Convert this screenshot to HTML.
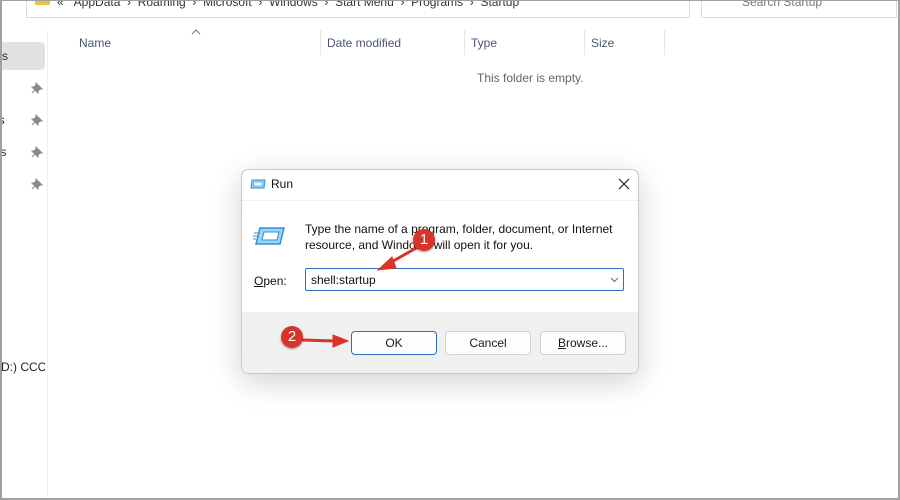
<html><head><style>
body{margin:0;width:900px;height:500px;overflow:hidden;background:#fff;font-family:"Liberation Sans",sans-serif;position:relative}
.a{position:absolute;white-space:nowrap}
.h{font-size:12px;color:#4a5572}
.sep{position:absolute;top:30px;width:1px;height:25px;background:#e5e5e5}
.pin{position:absolute;left:31px}
.btn{position:absolute;top:331px;height:22px;width:84px;border:1px solid #d0d0d0;border-radius:4px;background:#fdfdfd;font-size:12px;text-align:center;line-height:22px;color:#1a1a1a}
.badge{position:absolute;width:22px;height:22px;border-radius:50%;background:#d9342b;color:#fff;font-size:15px;text-align:center;line-height:22px;box-shadow:0 1px 2px rgba(0,0,0,.4)}
</style></head><body>
<div class="a" style="left:26px;top:-1px;width:662px;height:18px;border:1px solid #dcdcdc;border-top:none"></div>
<div class="a" style="left:35px;top:0;width:15px;height:5px;background:#f0c040"></div>
<div class="a" style="left:57px;top:-5px;font-size:12px;color:#333">«&nbsp;&nbsp;&nbsp;AppData&nbsp;&nbsp;›&nbsp;&nbsp;Roaming&nbsp;&nbsp;›&nbsp;&nbsp;Microsoft&nbsp;&nbsp;›&nbsp;&nbsp;Windows&nbsp;&nbsp;›&nbsp;&nbsp;Start Menu&nbsp;&nbsp;›&nbsp;&nbsp;Programs&nbsp;&nbsp;›&nbsp;&nbsp;Startup</div>
<div class="a" style="left:701px;top:-1px;width:194px;height:18px;border:1px solid #dcdcdc;border-top:none"></div>
<div class="a" style="left:742px;top:-5px;font-size:12px;color:#777">Search Startup</div>
<div class="a" style="left:0;top:42px;width:45px;height:28px;background:#e2e2e2;border-radius:0 4px 4px 0"></div>
<div class="a" style="left:-4px;top:49px;font-size:12px;color:#222">ss</div>
<div class="a" style="left:-4px;top:113px;font-size:12px;color:#222">ls</div>
<div class="a" style="left:-3px;top:145px;font-size:12px;color:#222">ts</div>
<div class="a" style="left:1px;top:360px;font-size:12px;color:#222;width:44px;overflow:hidden">D:) CCCC</div>
<svg class="pin" style="top:82px" width="12" height="12"><path d="M5 1l6 6-2 0-2 2 0 2-6-6 2 0 2-2z M4 8l-3 3" fill="#8a8a8a" stroke="#8a8a8a"/></svg>
<svg class="pin" style="top:114px" width="12" height="12"><path d="M5 1l6 6-2 0-2 2 0 2-6-6 2 0 2-2z M4 8l-3 3" fill="#8a8a8a" stroke="#8a8a8a"/></svg>
<svg class="pin" style="top:146px" width="12" height="12"><path d="M5 1l6 6-2 0-2 2 0 2-6-6 2 0 2-2z M4 8l-3 3" fill="#8a8a8a" stroke="#8a8a8a"/></svg>
<svg class="pin" style="top:178px" width="12" height="12"><path d="M5 1l6 6-2 0-2 2 0 2-6-6 2 0 2-2z M4 8l-3 3" fill="#8a8a8a" stroke="#8a8a8a"/></svg>
<div class="a" style="left:47px;top:30px;width:1px;height:468px;background:#f0f0f0"></div>
<div class="a h" style="left:79px;top:36px">Name</div>
<svg class="a" style="left:191px;top:29px" width="10" height="6"><path d="M1 5l4-4 4 4" fill="none" stroke="#777"/></svg>
<div class="sep" style="left:320px"></div><div class="a h" style="left:327px;top:36px">Date modified</div>
<div class="sep" style="left:464px"></div><div class="a h" style="left:471px;top:36px">Type</div>
<div class="sep" style="left:584px"></div><div class="a h" style="left:591px;top:36px">Size</div>
<div class="sep" style="left:664px"></div>
<div class="a" style="left:477px;top:71px;font-size:12px;color:#6a6070">This folder is empty.</div>
<div class="a" style="left:0;top:0;width:900px;height:500px;box-sizing:border-box;border:2px solid #a0a0a0;border-top-width:1px"></div>
<div class="a" style="left:241px;top:169px;width:396px;height:203px;border:1px solid #c8c8c8;border-radius:7px;background:#fff;overflow:hidden;box-shadow:0 8px 30px rgba(0,0,0,.18)">
 <svg class="a" style="left:8px;top:9px" width="16" height="11"><path d="M2 1h13l-1 8H1z" fill="#9ed4f4" stroke="#2f8fd6"/><path d="M4 3h9l-.5 4H3.5z" fill="#e8f6ff" stroke="#2f8fd6" stroke-width=".6"/></svg>
 <div class="a" style="left:29px;top:7px;font-size:12px;color:#111">Run</div>
 <svg class="a" style="left:376px;top:8px" width="12" height="12"><path d="M1 1l10 10M11 1L1 11" stroke="#222" stroke-width="1.2"/></svg>
 <div class="a" style="left:0;top:30px;width:396px;height:1px;background:#f0f0f0"></div>
 <svg class="a" style="left:11px;top:55px" width="34" height="22"><path d="M7 3h24l-4 16H3z" fill="#9ed4f4" stroke="#2f8fd6" stroke-width="1.5"/><path d="M11 7h15l-2 8H9z" fill="#fff" stroke="#2f8fd6"/><path d="M1 8h4M0 11h4M0 14h3" stroke="#2f8fd6"/></svg>
 <div class="a" style="left:63px;top:51px;font-size:12px;line-height:16px;color:#111">Type the name of a program, folder, document, or Internet<br>resource, and Windows will open it for you.</div>
 <div class="a" style="left:12px;top:104px;font-size:12px;color:#111"><u>O</u>pen:</div>
 <div class="a" style="left:63px;top:98px;width:317px;height:21px;border:1px solid #2f6fbf;border-radius:2px"></div>
 <div class="a" style="left:69px;top:103px;font-size:12px;color:#111">shell:startup</div>
 <svg class="a" style="left:368px;top:107px" width="9" height="6"><path d="M1 1l3.5 3.5L8 1" fill="none" stroke="#666"/></svg>
 <div class="a" style="left:0;top:142px;width:396px;height:61px;background:#f0f0f0"></div>
</div>
<div class="btn" style="left:351px;border-color:#2f6fbf">OK</div>
<div class="btn" style="left:445px">Cancel</div>
<div class="btn" style="left:540px"><u>B</u>rowse...</div>
<svg class="a" style="left:0;top:0" width="900" height="500"><g stroke="#d9342b" stroke-width="3" fill="#d9342b"><line x1="418" y1="247" x2="388" y2="264"/><polygon points="378,270 392,257 396,268" stroke-width="1"/><line x1="302" y1="340" x2="335" y2="341"/><polygon points="348,341 333,335 333,347" stroke-width="1"/></g></svg>
<div class="badge" style="left:413px;top:229px">1</div>
<div class="badge" style="left:281px;top:326px">2</div>
</body></html>
